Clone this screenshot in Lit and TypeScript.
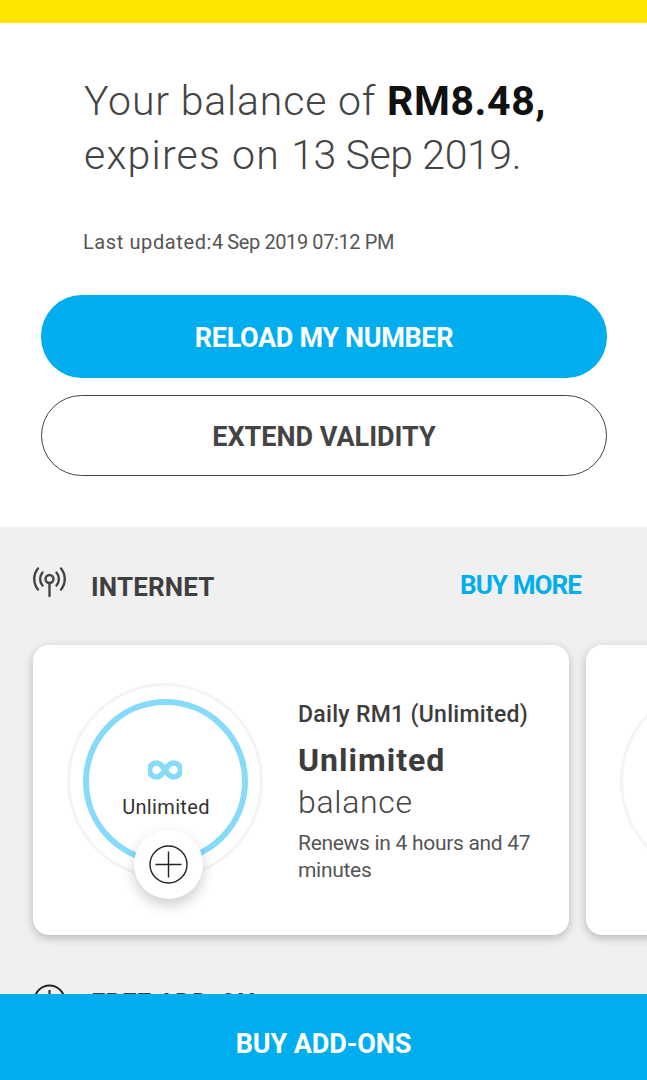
import { LitElement, css, html } from 'lit';
import { customElement } from 'lit/decorators.js';

@customElement('app-root')
export class AppRoot extends LitElement {
  static styles = css`
    :host {
      display: block;
      position: relative;
      height: 1080px;
      overflow: hidden;
      background: #fff;
      font-family: Roboto, "Liberation Sans", sans-serif;
      color: #3c3c3c;
    }

    .topbar {
      height: 23px;
      background: #ffe600;
    }

    .balance {
      padding: 51px 0 0 84px;
      height: 107px;
      font-size: 41px;
      line-height: 54px;
      font-weight: 300;
      color: #444;
      letter-spacing: -0.38px;
      white-space: nowrap;
    }

    .balance .lead {
      letter-spacing: 0.82px;
    }

    .balance .wide {
      letter-spacing: 1.2px;
    }

    .balance b {
      font-weight: 700;
      color: #111;
      letter-spacing: 0.6px;
    }

    .updated {
      margin: 49px 0 0 83px;
      height: 24px;
      font-size: 20px;
      line-height: 24px;
      color: #555;
      letter-spacing: -0.4px;
      white-space: nowrap;
    }

    .updated .label {
      letter-spacing: 0.6px;
    }

    .actions {
      display: flex;
      flex-direction: column;
      gap: 17px;
      padding: 41px 40px 0 41px;
    }

    .btn {
      box-sizing: border-box;
      height: 81px;
      padding-top: 2px;
      border-radius: 41px;
      display: flex;
      align-items: center;
      justify-content: center;
      font-size: 27px;
      font-weight: 700;
    }

    .btn.primary {
      height: 83px;
      background: #00aeef;
      color: #fff;
      letter-spacing: -0.35px;
    }

    .btn.outline {
      border: 1.5px solid #444;
      color: #444;
      letter-spacing: 0;
    }

    .panel {
      margin-top: 51px;
      height: 553px;
      background: #f0f0f0;
    }

    .panel-head {
      box-sizing: border-box;
      display: flex;
      align-items: center;
      height: 118px;
      padding: 2px 66px 0 33px;
    }

    .panel-head svg {
      width: 33px;
      height: 32px;
      margin: -10px 25px 0 0;
      flex: none;
    }

    .panel-title {
      flex: 1;
      font-size: 26px;
      font-weight: 700;
      color: #3f3f3f;
      letter-spacing: 0.15px;
    }

    .buy-more {
      font-size: 26px;
      font-weight: 700;
      color: #00aeef;
      letter-spacing: -0.9px;
      margin-top: -4px;
    }

    .cards {
      display: flex;
      gap: 17px;
      padding-left: 33px;
    }

    .card {
      flex: none;
      box-sizing: border-box;
      display: flex;
      width: 536px;
      height: 290px;
      padding: 38px 0 0 34px;
      border-radius: 16px;
      background: #fff;
      box-shadow: 0 3px 10px rgba(0, 0, 0, 0.24);
    }

    .gauge {
      flex: none;
      position: relative;
      box-sizing: border-box;
      width: 196px;
      height: 196px;
      border: 3px solid #f4f4f4;
      border-radius: 50%;
      display: flex;
      flex-direction: column;
      align-items: center;
    }

    .ring {
      position: absolute;
      inset: 13px 12px 12px 13px;
      border: 6px solid #86dafa;
      border-radius: 50%;
    }

    .gauge svg.inf {
      margin-top: 74px;
      width: 34px;
      height: 20px;
    }

    .gauge-label {
      margin: 15px 0 0 2px;
      font-size: 20px;
      line-height: 24px;
      color: #333;
      letter-spacing: 0.35px;
    }

    .add {
      position: absolute;
      left: 64px;
      top: 144px;
      width: 69px;
      height: 69px;
      border-radius: 50%;
      background: #fff;
      box-shadow: 0 6px 14px rgba(0, 0, 0, 0.2);
      display: flex;
      align-items: center;
      justify-content: center;
    }

    .add svg {
      width: 39px;
      height: 39px;
    }

    .info {
      margin: 16px 0 0 35px;
      min-width: 0;
    }

    .plan {
      font-size: 23px;
      line-height: 32px;
      font-weight: 500;
      color: #3c3c3c;
      letter-spacing: 0.3px;
      white-space: nowrap;
    }

    .amount {
      margin-top: 9px;
      font-size: 32px;
      line-height: 40px;
      font-weight: 700;
      color: #3c3c3c;
      letter-spacing: 1px;
    }

    .unit {
      margin-top: 1px;
      font-size: 32px;
      line-height: 42px;
      font-weight: 300;
      color: #444;
      letter-spacing: 0.7px;
    }

    .renew {
      margin-top: 7px;
      width: 240px;
      font-size: 21px;
      line-height: 27px;
      color: #555;
      letter-spacing: -0.3px;
    }

    .peek {
      width: 180px;
      padding: 0;
      overflow: hidden;
    }

    .peek-ring {
      box-sizing: border-box;
      flex: none;
      width: 196px;
      height: 196px;
      margin: 38px 0 0 34px;
      border: 3px solid #f4f4f4;
      border-radius: 50%;
    }

    .next-head {
      display: flex;
      align-items: flex-start;
      gap: 25px;
      padding: 49px 0 0 33px;
    }

    .next-head svg {
      width: 33px;
      height: 33px;
      flex: none;
    }

    .next-title {
      margin-top: 4px;
      font-size: 26px;
      line-height: 30px;
      font-weight: 700;
      color: #3f3f3f;
    }

    .bottom {
      position: absolute;
      left: 0;
      right: 0;
      bottom: 0;
      box-sizing: border-box;
      height: 86px;
      padding-top: 14px;
      background: #00aeef;
      color: #fff;
      display: flex;
      align-items: center;
      justify-content: center;
      font-size: 27px;
      font-weight: 700;
      letter-spacing: -0.1px;
    }
  `;

  render() {
    return html`
      <div class="topbar"></div>
      <div class="balance">
        <span class="lead">Your balance of </span><b>RM8.48,</b><br /><span class="wide">expires on </span>13 Sep 2019.
      </div>
      <div class="updated"><span class="label">Last updated:</span>4 Sep 2019 07:12 PM</div>
      <div class="actions">
        <div class="btn primary">RELOAD MY NUMBER</div>
        <div class="btn outline">EXTEND VALIDITY</div>
      </div>
      <div class="panel">
        <div class="panel-head">
          <svg viewBox="0 0 33 32" fill="none" stroke="#444" stroke-width="2.4" stroke-linecap="round">
            <circle cx="16.5" cy="13" r="4" />
            <path d="M16.5 17v13" />
            <path d="M9.5 6.5c-3.2 3.8-3.2 9.200 0 13" />
            <path d="M23.500 6.500c3.200 3.800 3.200 9.200 0 13" />
            <path d="M5 2.500c-5 6-5 15 0 21" />
            <path d="M28 2.500c5 6 5 15 0 21" />
          </svg>
          <div class="panel-title">INTERNET</div>
          <div class="buy-more">BUY MORE</div>
        </div>
        <div class="cards">
          <div class="card">
            <div class="gauge">
              <div class="ring"></div>
              <svg class="inf" viewBox="0 0 34 20" fill="none" stroke="#86dafa" stroke-width="5.500">
                <path d="M17 10c-2.500-4-5-7-8.500-7a7 7 0 0 0 0 14c3.500 0 6-3 8.500-7s5-7 8.500-7a7 7 0 0 1 0 14c-3.500 0-6-3-8.500-7z" />
              </svg>
              <div class="gauge-label">Unlimited</div>
              <div class="add">
                <svg viewBox="0 0 39 39" fill="none" stroke="#222" stroke-width="1.400">
                  <circle cx="19.500" cy="19.500" r="18.500" />
                  <path d="M19.500 6.500v26M6.500 19.500h26" />
                </svg>
              </div>
            </div>
            <div class="info">
              <div class="plan">Daily RM1 (Unlimited)</div>
              <div class="amount">Unlimited</div>
              <div class="unit">balance</div>
              <div class="renew">Renews in 4 hours and 47 minutes</div>
            </div>
          </div>
          <div class="card peek"><div class="peek-ring"></div></div>
        </div>
        <div class="next-head">
          <svg viewBox="0 0 33 33" fill="none" stroke="#222" stroke-width="2">
            <circle cx="16.500" cy="16.500" r="15" />
            <path d="M16.500 6v21M6 16.500h21" />
          </svg>
          <div class="next-title">FREE ADD-ON</div>
        </div>
      </div>
      <div class="bottom">BUY ADD-ONS</div>
    `;
  }
}
